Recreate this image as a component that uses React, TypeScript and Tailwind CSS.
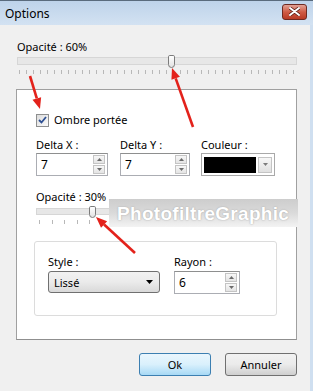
import React from 'react';

const font = { fontFamily: '"Noto Sans", "Open Sans", sans-serif' };

const Spin: React.FC = () => (
  <div className="flex flex-col gap-[1px] mr-[2px]">
    <div className="w-[12px] h-[9px] border border-[#c4c4c4] bg-gradient-to-b from-[#f7f7f7] to-[#e4e4e4] flex items-center justify-center">
      <svg width="5" height="3" viewBox="0 0 5 3"><path d="M0 3 L2.5 0 L5 3 Z" fill="#6b6b6b" /></svg>
    </div>
    <div className="w-[12px] h-[9px] border border-[#c4c4c4] bg-gradient-to-b from-[#f7f7f7] to-[#e4e4e4] flex items-center justify-center">
      <svg width="5" height="3" viewBox="0 0 5 3"><path d="M0 0 L2.5 3 L5 0 Z" fill="#6b6b6b" /></svg>
    </div>
  </div>
);

const NumField: React.FC<{ value: string; w: string }> = ({ value, w }) => (
  <div className={`${w} h-[23px] border border-[#abadb3] border-t-[#8e8f8f] bg-white flex items-center justify-between pl-[4px]`}>
    <span className="text-[12px] leading-none">{value}</span>
    <Spin />
  </div>
);

const Ticks: React.FC<{ n: number }> = ({ n }) => (
  <div className="flex justify-between h-[4px] px-[3px]">
    {Array.from({ length: n }).map((_, i) => (
      <div key={i} className="w-[1px] h-full bg-[#b8b8b8]" />
    ))}
  </div>
);

const Arrow: React.FC<{ x1: number; y1: number; x2: number; y2: number }> = ({ x1, y1, x2, y2 }) => {
  const a = Math.atan2(y2 - y1, x2 - x1);
  const len = 11;
  const hw = 4.5;
  const bx = x2 - len * Math.cos(a);
  const by = y2 - len * Math.sin(a);
  const px = -Math.sin(a) * hw;
  const py = Math.cos(a) * hw;
  return (
    <g>
      <line x1={x1} y1={y1} x2={bx} y2={by} stroke="#e3221b" strokeWidth="2.6" />
      <polygon points={`${x2},${y2} ${bx + px},${by + py} ${bx - px},${by - py}`} fill="#e3221b" />
    </g>
  );
};

export default function App() {
  return (
    <div className="relative w-[313px] h-[391px] overflow-hidden bg-[#f0f0f0] text-black flex flex-col" style={font}>
      {/* barre de titre */}
      <div className="h-[25px] border-t border-[#5a6b7d] bg-gradient-to-b from-[#bed3ea] to-[#d3e2f2] flex items-center justify-between pl-[5px] pr-[6px]">
        <span className="text-[12px] leading-none mt-[1px]">Options</span>
        <div className="w-[25px] h-[16px] mb-[3px] rounded-[3px] border border-[#6e2a22] bg-gradient-to-b from-[#e2a195] via-[#cf5b45] to-[#b93a25] flex items-center justify-center">
          <svg width="11" height="9" viewBox="0 0 11 9">
            <path d="M1 1 L10 8 M10 1 L1 8" stroke="#5a1c14" strokeWidth="3.4" strokeLinecap="round" />
            <path d="M1 1 L10 8 M10 1 L1 8" stroke="#ffffff" strokeWidth="2" strokeLinecap="round" />
          </svg>
        </div>
      </div>

      <div className="flex flex-1 text-[11px]">
        <div className="flex-1 flex flex-col pl-[16px] pr-[13px]">
          {/* opacité globale */}
          <div className="mt-[14px] pl-[1px] leading-[16px]">Opacité : 60%</div>
          <div className="relative h-[13px]">
            <div className="absolute left-[1px] right-0 top-[2px] h-[8px] border border-[#d6d6d6] bg-[#e7e7e7]" />
            <div className="absolute left-[152px] top-0 w-[7px] h-[13px] rounded-[2px] rounded-b-[4px] border border-[#7b7b7b] bg-gradient-to-b from-[#ffffff] to-[#e2e2e2]" />
          </div>
          <div className="mt-[2px]">
            <Ticks n={40} />
          </div>

          {/* cadre */}
          <div className="mt-[15px] h-[251px] border border-[#a0a0a0] border-b-[#8f8f8f] bg-white pl-[19px] pr-[19px] pt-[22px]">
            <div className="flex items-center gap-[5px]">
              <div className="w-[13px] h-[13px] border border-[#8e8f8f] bg-gradient-to-br from-[#dcdcdc] to-[#fbfbfb] flex items-center justify-center">
                <svg width="9" height="8" viewBox="0 0 9 8">
                  <path d="M1 4 L3.5 6.5 L8 1" stroke="#2d4f93" strokeWidth="1.8" fill="none" />
                </svg>
              </div>
              <span className="leading-[16px]">Ombre portée</span>
            </div>

            <div className="flex mt-[9px]">
              <div className="flex flex-col w-[84px]">
                <span className="leading-[16px]">Delta X :</span>
                <NumField value="7" w="w-[72px]" />
              </div>
              <div className="flex flex-col w-[81px]">
                <span className="leading-[16px]">Delta Y :</span>
                <NumField value="7" w="w-[70px]" />
              </div>
              <div className="flex flex-col">
                <span className="leading-[16px]">Couleur :</span>
                <div className="w-[74px] h-[23px] border border-[#a9a9a9] bg-white flex items-center gap-[2px] px-[2px]">
                  <div className="w-[52px] h-[16px] bg-black" />
                  <div className="w-[14px] h-[16px] border border-[#c4c4c4] bg-gradient-to-b from-[#f7f7f7] to-[#e0e0e0] flex items-center justify-center">
                    <svg width="5" height="3" viewBox="0 0 5 3"><path d="M0 0 L2.5 3 L5 0 Z" fill="#7b7b7b" /></svg>
                  </div>
                </div>
              </div>
            </div>

            {/* opacité de l'ombre */}
            <div className="relative mt-[13px]">
              <div className="leading-[16px]">Opacité : 30%</div>
              <div className="relative mt-[1px] h-[12px] w-[200px]">
                <div className="absolute left-0 right-0 top-[2px] h-[7px] border border-[#d6d6d6] bg-[#e7e7e7]" />
                <div className="absolute left-[53px] top-0 w-[7px] h-[12px] rounded-[2px] rounded-b-[4px] border border-[#7b7b7b] bg-gradient-to-b from-[#ffffff] to-[#e2e2e2]" />
              </div>
              <div className="mt-[2px] w-[70px] flex justify-between px-[3px] h-[4px]">
                {Array.from({ length: 6 }).map((_, i) => (
                  <div key={i} className="w-[1px] h-full bg-[#b8b8b8]" />
                ))}
              </div>
              {/* filigrane */}
              <div className="absolute left-[73px] top-[10px] w-[189px] h-[28px] bg-gradient-to-b from-[#cdcdcd] via-[#dadada] to-[#f3f3f3] flex items-center pl-[8px]">
                <span className="text-[19px] font-bold leading-none text-white tracking-[0.3px]" style={{ textShadow: '0 0 1px #a8a8a8, 0 0 2px #bdbdbd', fontFamily: '"Liberation Sans", sans-serif' }}>
                  PhotofiltreGraphic
                </span>
              </div>
            </div>

            {/* cadre style */}
            <div className="mt-[17px] -ml-[2px] w-[243px] h-[75px] border border-[#dcdcdc] rounded-[3px] flex gap-[14px] pl-[13px] pt-[12px]">
              <div className="flex flex-col">
                <span className="leading-[16px]">Style :</span>
                <div className="mt-[1px] w-[112px] h-[22px] rounded-[3px] border border-[#707070] bg-gradient-to-b from-[#f2f2f2] via-[#ebebeb] to-[#d9d9d9] flex items-center justify-between pl-[5px] pr-[6px]">
                  <span className="leading-none">Lissé</span>
                  <svg width="7" height="4" viewBox="0 0 7 4"><path d="M0 0 L3.5 4 L7 0 Z" fill="#000" /></svg>
                </div>
              </div>
              <div className="flex flex-col">
                <span className="leading-[16px]">Rayon :</span>
                <div className="mt-[1px]">
                  <NumField value="6" w="w-[66px]" />
                </div>
              </div>
            </div>
          </div>

          {/* boutons */}
          <div className="flex justify-end gap-[14px] mt-[13px]">
            <button className="w-[72px] h-[23px] rounded-[3px] border border-[#3c7fb1] bg-gradient-to-b from-[#eaf6fd] via-[#d9f0fc] to-[#a7d9f5] leading-none">
              Ok
            </button>
            <button className="w-[72px] h-[23px] rounded-[3px] border border-[#707070] bg-gradient-to-b from-[#f2f2f2] via-[#ebebeb] to-[#cfcfcf] leading-none">
              Annuler
            </button>
          </div>
        </div>
        <div className="w-[4px] bg-[#cfdff0]" />
      </div>

      {/* flèches rouges */}
      <svg className="absolute inset-0 pointer-events-none" width="313" height="391">
        <Arrow x1={30} y1={76} x2={40} y2={109} />
        <Arrow x1={193} y1={127} x2={172} y2={68} />
        <Arrow x1={135} y1={253} x2={96} y2={217} />
      </svg>
    </div>
  );
}
